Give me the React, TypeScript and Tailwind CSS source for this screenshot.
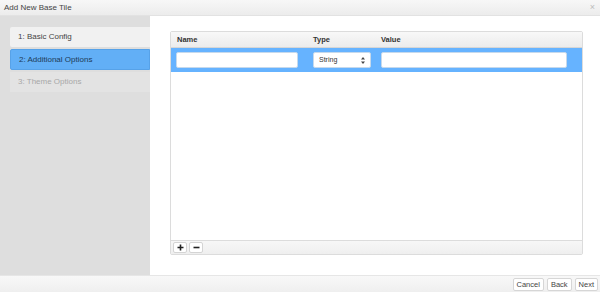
export default function App() {
  const steps = [
    { label: '1: Basic Config', state: 'done' },
    { label: '2: Additional Options', state: 'active' },
    { label: '3: Theme Options', state: 'disabled' },
  ];

  return (
    <div className="w-[600px] h-[292px] flex flex-col bg-white text-[8px] text-[#333] overflow-hidden" style={{ fontFamily: '"Liberation Sans", Arial, sans-serif' }}>
      {/* title bar */}
      <div className="h-[16px] shrink-0 flex items-center justify-between px-[4px] bg-gradient-to-b from-[#f7f7f7] to-[#ececec] border-b border-[#e2e2e2]">
        <span className="text-[#444]">Add New Base Tile</span>
        <span className="text-[#bbb] text-[9px] leading-none pr-[1px]">×</span>
      </div>

      <div className="flex flex-1 min-h-0">
        {/* wizard steps */}
        <div className="w-[150px] shrink-0 bg-[#dedede] pt-[11px] pl-[10px] flex flex-col gap-[2px]">
          {steps.map((s) => (
            <div
              key={s.label}
              className={
                s.state === 'active'
                  ? 'h-[21px] flex items-center pl-[8px] rounded-l-[2px] bg-[#62aff6] text-[#1d3b57] border border-[#57a2e8]'
                  : s.state === 'done'
                  ? 'h-[20px] flex items-center pl-[8px] rounded-l-[2px] bg-[#f1f1f1] text-[#444]'
                  : 'h-[20px] flex items-center pl-[8px] bg-[#e3e3e3] text-[#a8a8a8]'
              }
            >
              {s.label}
            </div>
          ))}
        </div>

        {/* content */}
        <div className="flex-1 pt-[15px] pl-[20px] pr-[17px] pb-[20px] flex">
          <div className="flex-1 flex flex-col border border-[#dcdcdc] rounded-[2px]">
            <div className="h-[16px] flex items-center bg-gradient-to-b from-[#f8f8f8] to-[#ececec] border-b border-[#d6d6d6] font-bold text-[#333] text-[7.5px]">
              <span className="w-[142px] pl-[6px]">Name</span>
              <span className="w-[68px]">Type</span>
              <span>Value</span>
            </div>
            <div className="h-[24px] flex items-center bg-[#66b3ff] pl-[5px] pr-[15px] gap-[0px]">
              <div className="w-[122px] h-[16px] bg-white rounded-[2px] border border-[#c6d9ec]" />
              <div className="ml-[15px] w-[58px] h-[16px] bg-white rounded-[2px] border border-[#c6d9ec] flex items-center justify-between px-[5px] text-[7px] text-[#333]">
                <span>String</span>
                <svg width="4" height="7" viewBox="0 0 4 7"><path d="M2 0 L4 2.5 H0 Z M2 7 L4 4.5 H0 Z" fill="#444" /></svg>
              </div>
              <div className="ml-[10px] flex-1 h-[16px] bg-white rounded-[2px] border border-[#c6d9ec]" />
            </div>
            <div className="flex-1 bg-white" />
            <div className="h-[14px] flex items-center gap-[2px] pl-[2px] bg-gradient-to-b from-[#f7f7f7] to-[#efefef] border-t border-[#dcdcdc]">
              <div className="w-[14px] h-[11px] flex items-center justify-center bg-white border border-[#d4d4d4] rounded-[2px]">
                <svg width="7" height="7" viewBox="0 0 7 7"><path d="M3.5 0.5 V6.5 M0.5 3.5 H6.5" stroke="#222" strokeWidth="1.6" /></svg>
              </div>
              <div className="w-[14px] h-[11px] flex items-center justify-center bg-white border border-[#d4d4d4] rounded-[2px]">
                <svg width="7" height="7" viewBox="0 0 7 7"><path d="M0.5 3.5 H6.5" stroke="#222" strokeWidth="1.6" /></svg>
              </div>
            </div>
          </div>
        </div>
      </div>

      {/* footer */}
      <div className="h-[17px] shrink-0 flex items-center justify-end gap-[3px] pr-[2px] bg-gradient-to-b from-[#f8f8f8] to-[#efefef] border-t border-[#e6e6e6]">
        <button className="h-[13px] px-[3px] bg-white border border-[#d6d6d6] rounded-[2px] text-[7.5px] text-[#444]">Cancel</button>
        <button className="h-[13px] px-[3px] bg-white border border-[#d6d6d6] rounded-[2px] text-[7.5px] text-[#444]">Back</button>
        <button className="h-[13px] px-[3px] bg-white border border-[#d6d6d6] rounded-[2px] text-[7.5px] text-[#444]">Next</button>
      </div>
    </div>
  );
}
